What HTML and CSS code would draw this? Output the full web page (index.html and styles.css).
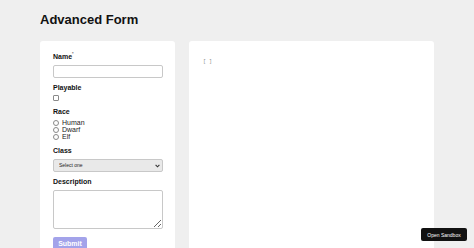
FILE: index.html
```html
<!DOCTYPE html>
<html>
<head>
<meta charset="utf-8">
<link rel="stylesheet" href="styles.css">
</head>
<body>
<div class="page">
  <h1 class="title">Advanced Form</h1>
  <div class="layout">
    <form class="card form">
      <div class="field">
        <label class="label">Name<sup class="req">*</sup></label>
        <input class="text-input" type="text">
      </div>
      <div class="field">
        <label class="label">Playable</label>
        <input class="check" type="checkbox">
      </div>
      <div class="field">
        <label class="label">Race</label>
        <div class="radios">
          <div class="radio-row"><input class="radio" type="radio" name="race"><span class="radio-text">Human</span></div>
          <div class="radio-row"><input class="radio" type="radio" name="race"><span class="radio-text">Dwarf</span></div>
          <div class="radio-row"><input class="radio" type="radio" name="race"><span class="radio-text">Elf</span></div>
        </div>
      </div>
      <div class="field">
        <label class="label">Class</label>
        <div class="select-wrap">
          <select class="select"><option>Select one</option></select>
          <svg class="chevron" width="5" height="4" viewBox="0 0 5 4"><path d="M0.6 0.8 L2.5 2.8 L4.4 0.8" fill="none" stroke="#333" stroke-width="1.1"/></svg>
        </div>
      </div>
      <div class="field">
        <label class="label">Description</label>
        <textarea class="textarea"></textarea>
      </div>
      <button class="submit" type="button">Submit</button>
    </form>
    <div class="card output">
      <pre class="json">[ ]</pre>
    </div>
  </div>
</div>
<button class="sandbox" type="button">Open Sandbox</button>
</body>
</html>
```

FILE: styles.css
```css
* { box-sizing: border-box; }
html, body { margin: 0; padding: 0; }
body {
  background: #efefef;
  font-family: "Liberation Sans", Arial, sans-serif;
  color: #111;
  height: 248px;
  overflow: hidden;
}
.page {
  padding: 12px 40px 0 40px;
}
.title {
  margin: 0 0 13px 0;
  font-size: 13px;
  line-height: 16px;
  font-weight: 700;
  color: #111;
}
.layout {
  display: grid;
  grid-template-columns: 135px 1fr;
  gap: 14px;
  height: 207px;
}
.card {
  background: #fff;
  border-radius: 3px 3px 0 0;
  overflow: hidden;
}
.form {
  padding: 12px 12px 0 13px;
  display: flex;
  flex-direction: column;
}
.field {
  display: flex;
  flex-direction: column;
  align-items: flex-start;
}
.label {
  display: block;
  font-size: 7px;
  line-height: 8px;
  font-weight: 700;
  margin-bottom: 4px;
  color: #111;
}
.req {
  font-size: 4px;
  line-height: 4px;
  vertical-align: top;
  position: relative;
  top: -1px;
  color: #666;
}
.text-input {
  display: block;
  width: 110px;
  height: 13px;
  margin: 0 0 6px 0;
  border: 1px solid #c8c8c8;
  border-radius: 2px;
  background: #fff;
  padding: 0;
  outline: none;
}
.check {
  display: block;
  appearance: none;
  -webkit-appearance: none;
  width: 6px;
  height: 6px;
  border: 1px solid #8a8a8a;
  border-radius: 1px;
  margin: -1px 0 7px 0;
  background: #fff;
}
.radios {
  display: flex;
  flex-direction: column;
  margin: -1px 0 7px 0;
}
.radio-row {
  display: flex;
  align-items: center;
  gap: 3px;
  height: 7px;
}
.radio-text {
  font-size: 7px;
  line-height: 7px;
  color: #222;
}
.radio {
  display: block;
  appearance: none;
  -webkit-appearance: none;
  width: 6px;
  height: 6px;
  border: 1px solid #8a8a8a;
  border-radius: 50%;
  margin: 0;
  background: #fff;
}
.select-wrap {
  position: relative;
  width: 110px;
  height: 13px;
  margin-bottom: 6px;
}
.select {
  display: block;
  appearance: none;
  -webkit-appearance: none;
  width: 110px;
  height: 13px;
  border: 1px solid #c8c8c8;
  border-radius: 2px;
  background: #e9e9e9;
  font-family: "Liberation Sans", Arial, sans-serif;
  font-size: 5px;
  line-height: 11px;
  color: #222;
  padding: 0 0 0 5px;
  margin: 0;
}
.chevron {
  position: absolute;
  right: 3px;
  top: 5px;
}
.textarea {
  display: block;
  width: 110px;
  height: 39px;
  border: 1px solid #c8c8c8;
  border-radius: 2px;
  background: #fff;
  resize: both;
  padding: 0;
  margin: 0 0 8px 0;
  font-size: 6px;
}
.submit {
  align-self: flex-start;
  flex-shrink: 0;
  width: 34px;
  height: 13px;
  border: none;
  border-radius: 2px;
  background: #a3a3ea;
  color: #fff;
  font-family: "Liberation Sans", Arial, sans-serif;
  font-weight: 700;
  font-size: 7px;
  padding: 0;
}
.output {
  padding: 18px 14px;
}
.json {
  margin: 0;
  font-family: "Liberation Mono", monospace;
  font-size: 5px;
  line-height: 6px;
  color: #888;
}
.sandbox {
  position: fixed;
  right: 7px;
  bottom: 7px;
  width: 46px;
  height: 13px;
  background: #111;
  color: #fff;
  border: none;
  border-radius: 2px;
  font-family: "Liberation Sans", Arial, sans-serif;
  font-size: 5px;
  padding: 0;
}
```
